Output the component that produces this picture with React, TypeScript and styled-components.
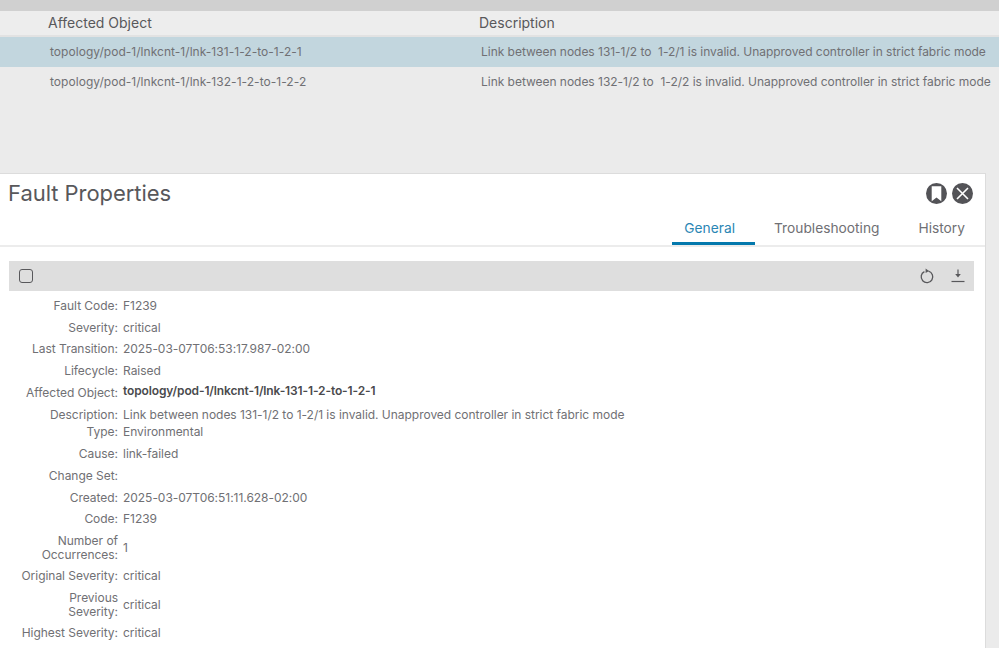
import styled, {createGlobalStyle} from "styled-components";

const faults = [
    {object: "topology/pod-1/lnkcnt-1/lnk-131-1-2-to-1-2-1", nodes: "131-1/2", to: "1-2/1", selected: true},
    {object: "topology/pod-1/lnkcnt-1/lnk-132-1-2-to-1-2-2", nodes: "132-1/2", to: "1-2/2", selected: false},
];

interface Property {
    label: string,
    value: string,
    strong?: boolean,
    tight?: boolean,
    wrap?: boolean,
}

const properties: Property[] = [
    {label: "Fault Code:", value: "F1239"},
    {label: "Severity:", value: "critical"},
    {label: "Last Transition:", value: "2025-03-07T06:53:17.987-02:00"},
    {label: "Lifecycle:", value: "Raised"},
    {label: "Affected Object:", value: "topology/pod-1/lnkcnt-1/lnk-131-1-2-to-1-2-1", strong: true},
    {label: "Description:", value: "Link between nodes 131-1/2 to 1-2/1 is invalid. Unapproved controller in strict fabric mode", tight: true},
    {label: "Type:", value: "Environmental"},
    {label: "Cause:", value: "link-failed"},
    {label: "Change Set:", value: ""},
    {label: "Created:", value: "2025-03-07T06:51:11.628-02:00"},
    {label: "Code:", value: "F1239"},
    {label: "Number of Occurrences:", value: "1", wrap: true},
    {label: "Original Severity:", value: "critical"},
    {label: "Previous Severity:", value: "critical", wrap: true},
    {label: "Highest Severity:", value: "critical"},
];

export default function App() {
    return <Page>
        <GlobalStyle/>
        <TopStrip/>
        <TableHeader>
            <ObjectHeading>Affected Object</ObjectHeading>
            <DescriptionHeading>Description</DescriptionHeading>
        </TableHeader>
        {faults.map(f => <TableRow key={f.object} $selected={f.selected}>
            <ObjectCell>{f.object}</ObjectCell>
            <DescriptionCell>Link between nodes {f.nodes} to &nbsp;{f.to} is invalid. Unapproved controller in strict fabric mode</DescriptionCell>
        </TableRow>)}
        <Panel>
            <PanelTitleRow>
                <Title>Fault Properties</Title>
                <RoundButtons>
                    <RoundButton>
                        <svg width="21" height="21" viewBox="0 0 21 21">
                            <path d="M5.7 3.2h9.6v15L10.5 14.4 5.7 18.2z" fill="#fff"/>
                        </svg>
                    </RoundButton>
                    <RoundButton>
                        <svg width="21" height="21" viewBox="0 0 21 21">
                            <path d="M5 5l11 11M16 5L5 16" stroke="#fff" strokeWidth="1.6" fill="none"/>
                        </svg>
                    </RoundButton>
                </RoundButtons>
            </PanelTitleRow>
            <Tabs>
                <Tab $active>General</Tab>
                <Tab>Troubleshooting</Tab>
                <Tab>History</Tab>
            </Tabs>
            <Toolbar>
                <Checkbox/>
                <ToolIcons>
                    <svg width="16" height="16" viewBox="0 0 16 16" fill="none">
                        <path d="M9.5 3.2A5.8 5.8 0 1 1 5.4 3.6" stroke="#58585b" strokeWidth="1.3"/>
                        <path d="M6.6 0.6L10 2.9 6.6 5z" fill="#58585b"/>
                    </svg>
                    <svg width="16" height="16" viewBox="0 0 16 16" fill="none">
                        <path d="M8 1.5v6" stroke="#58585b" strokeWidth="1.2"/>
                        <path d="M5.2 6h5.6L8 9.6z" fill="#58585b"/>
                        <path d="M1.5 13.5h13" stroke="#58585b" strokeWidth="1.2"/>
                    </svg>
                </ToolIcons>
            </Toolbar>
            <PropertyList>
                {properties.map(p => <PropertyRow key={p.label} $tight={p.tight} $wrap={p.wrap}>
                    <PropertyLabel $wrap={p.wrap}>{p.label}</PropertyLabel>
                    <PropertyValue $strong={p.strong}>{p.value}</PropertyValue>
                </PropertyRow>)}
            </PropertyList>
        </Panel>
    </Page>
}

const GlobalStyle = createGlobalStyle`
    html, body {
        margin: 0;
        padding: 0;
        height: 100%;
        overflow: hidden;
        background: #ebebeb;
    }

    * {
        box-sizing: border-box;
    }
`

const Page = styled.div`
    display: flex;
    flex-direction: column;
    width: 999px;
    height: 648px;
    overflow: hidden;
    background: #ebebeb;
    font-family: Inter, "Liberation Sans", sans-serif;
`

const TopStrip = styled.div`
    flex: 0 0 11px;
    background: #d0d0d0;
`

const TableHeader = styled.div`
    flex: 0 0 26px;
    display: flex;
    align-items: center;
    padding-bottom: 2px;
    background: #ededed;
    border-bottom: 2px solid #e2e2e2;
    color: #58585b;
    font-size: 14px;
`

const ObjectHeading = styled.div`
    flex: 0 0 479px;
    padding-left: 48px;
`

const DescriptionHeading = styled.div`
    flex: 1;
`

const TableRow = styled.div<{$selected?: boolean}>`
    flex: 0 0 29.5px;
    display: flex;
    align-items: center;
    background: ${p => p.$selected ? "#c2d6de" : "transparent"};
    color: #707074;
    font-size: 12px;
    white-space: nowrap;
`

const ObjectCell = styled.div`
    flex: 0 0 481px;
    padding-left: 50px;
    letter-spacing: 0.04px;
`

const DescriptionCell = styled.div`
    flex: 1;
    letter-spacing: -0.03px;
`

const Panel = styled.div`
    flex: 1;
    width: 986px;
    margin-top: 77px;
    background: #fff;
    border-top: 1px solid #dcdcdc;
    border-right: 1px solid #dcdcdc;
    overflow: hidden;
`

const PanelTitleRow = styled.div`
    height: 38px;
    display: flex;
    align-items: center;
    justify-content: space-between;
    padding: 0 12px 0 8px;
`

const Title = styled.div`
    color: #58585b;
    font-size: 22px;
    letter-spacing: -0.05px;
`

const RoundButtons = styled.div`
    display: flex;
    gap: 5px;
`

const RoundButton = styled.div`
    width: 21px;
    height: 21px;
    border-radius: 50%;
    background: #535357;
    display: flex;
    align-items: center;
    justify-content: center;
`

const Tabs = styled.div`
    height: 35px;
    display: flex;
    justify-content: flex-end;
    gap: 7px;
    border-bottom: 2px solid #ececec;
`

const Tab = styled.div<{$active?: boolean}>`
    height: 33px;
    padding: 8px 20px 0 12px;
    color: ${p => p.$active ? "#2a86b4" : "#707074"};
    border-bottom: 3px solid ${p => p.$active ? "#0479ad" : "transparent"};
    font-size: 13.75px;
`

const Toolbar = styled.div`
    height: 30px;
    margin: 14px 11px 0 9px;
    padding: 0 8px 0 10px;
    display: flex;
    align-items: center;
    justify-content: space-between;
    background: #dedede;
`

const Checkbox = styled.div`
    width: 14px;
    height: 14px;
    border: 1.5px solid #58585b;
    border-radius: 3px;
`

const ToolIcons = styled.div`
    display: flex;
    align-items: center;
    gap: 15px;
`

const PropertyList = styled.div`
    padding-top: 4px;
`

const PropertyRow = styled.div<{$tight?: boolean, $wrap?: boolean}>`
    display: grid;
    grid-template-columns: 118px 1fr;
    column-gap: 5px;
    align-items: center;
    height: ${p => p.$wrap ? "35.25px" : "21.75px"};
    margin-bottom: ${p => p.$tight ? "-4px" : 0};
    font-size: 12px;
    line-height: 14px;
`

const PropertyLabel = styled.div<{$wrap?: boolean}>`
    color: #707074;
    text-align: right;
    letter-spacing: -0.03px;
    ${p => p.$wrap ? "padding-left: 30px;" : ""}
`

const PropertyValue = styled.div<{$strong?: boolean}>`
    color: ${p => p.$strong ? "#4a4a4d" : "#707074"};
    font-weight: ${p => p.$strong ? 600 : 400};
    letter-spacing: ${p => p.$strong ? "-0.12px" : "-0.03px"};
    white-space: nowrap;
    ${p => p.$strong ? "margin-top: -3px;" : ""}
`
